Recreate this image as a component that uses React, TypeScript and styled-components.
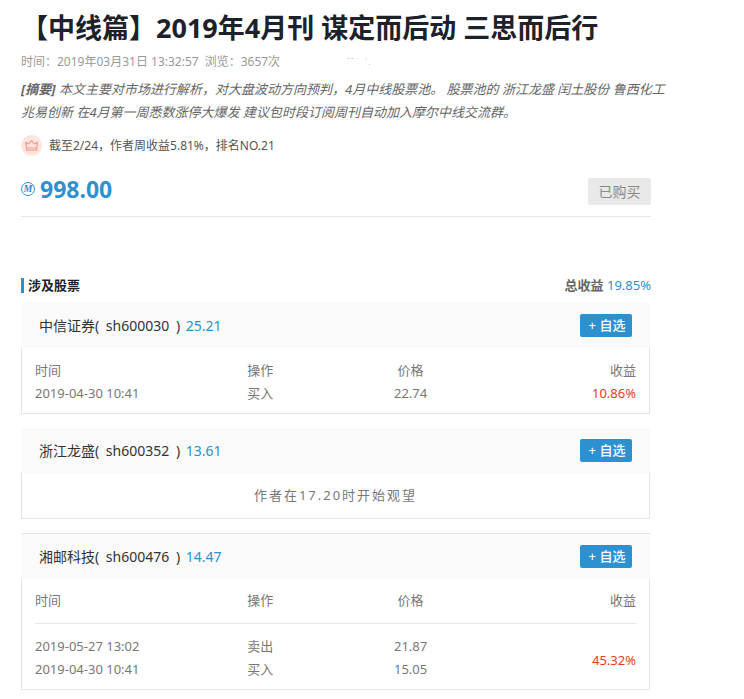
import React from "react";
import styled, { createGlobalStyle } from "styled-components";

const GlobalStyle = createGlobalStyle`
  * { box-sizing: border-box; }
  body {
    margin: 0;
    background: #fff;
    color: #777;
    font-family: "Noto Sans", "Noto Sans CJK SC", sans-serif;
    font-size: 13px;
    line-height: 23px;
  }
  h1, h2, h3, p { margin: 0; }
`;

const Page = styled.main`
  padding: 8px 93px 9px 21px;
`;

const Title = styled.h1`
  color: #1d2129;
  font-size: 27px;
  line-height: 40px;
  font-weight: 700;
  white-space: nowrap;
`;

const Meta = styled.div`
  display: flex;
  align-items: center;
  gap: 6px;
  height: 26px;
  color: #999;
  font-size: 12px;
`;

const FadedMark = styled.svg`
  margin-left: 60px;
`;

const Summary = styled.p`
  padding-top: 4px;
  color: #666;
  font-style: italic;
  white-space: nowrap;
`;

const Rank = styled.div`
  display: flex;
  align-items: center;
  gap: 7px;
  margin-top: 10px;
  color: #555;
  font-size: 12px;
`;

const PriceRow = styled.div`
  display: flex;
  align-items: flex-start;
  justify-content: space-between;
  margin-top: 21px;
  padding-bottom: 11px;
  border-bottom: 1px solid #e5e5e5;
`;

const Price = styled.div`
  display: flex;
  align-items: center;
  gap: 5px;
  color: #2d91cf;
  font-size: 23px;
  line-height: 22px;
  font-weight: 700;
`;

const Coin = styled.span`
  display: flex;
  align-items: center;
  justify-content: center;
  width: 14px;
  height: 14px;
  border: 1px solid #2d91cf;
  border-radius: 50%;
  font: italic 700 10px/12px "Liberation Serif", serif;
`;

const Purchased = styled.button`
  min-width: 63px;
  height: 27px;
  padding: 0 10px;
  border: 0;
  border-radius: 2px;
  background: #e9e9e9;
  color: #888;
  font: inherit;
  font-size: 14px;
`;

const SectionHead = styled.header`
  display: flex;
  align-items: center;
  justify-content: space-between;
  margin: 57px 0 6px;
`;

const SectionTitle = styled.h2`
  padding-left: 4px;
  border-left: 3px solid #2d91cf;
  color: #1d2129;
  font-size: 13px;
  line-height: 15px;
  font-weight: 700;
`;

const Total = styled.div`
  color: #2d91cf;
  strong { color: #666; }
`;

const Stack = styled.div`
  display: flex;
  flex-direction: column;
  gap: 14px;
  margin-right: 1px;
`;

const Card = styled.section<{ $topLine?: boolean }>`
  border-top: ${(p) => (p.$topLine ? "1px solid #e5e5e5" : "0")};
`;

const CardHead = styled.header`
  display: flex;
  align-items: center;
  justify-content: space-between;
  height: 45px;
  padding: 0 18px;
  background: #fafafa;
`;

const StockName = styled.h3`
  color: #333;
  font-size: 14px;
  font-weight: 400;
`;

const Code = styled.span`
  margin: 0 3px;
`;

const Quote = styled.span`
  margin-left: 2px;
  color: #2d91cf;
`;

const AddButton = styled.button`
  min-width: 52px;
  height: 23px;
  padding: 0 6px 0 8px;
  border: 0;
  border-radius: 2px;
  background: #2d91cf;
  color: #fff;
  font: inherit;
  font-weight: 500;
  line-height: 23px;
  cursor: pointer;
`;

const CardBody = styled.div<{ $ruled?: boolean }>`
  padding: ${(p) => (p.$ruled ? "10px" : "11px")} 13px 8px;
  border: 1px solid #e5e5e5;
  border-top: 0;
`;

const Notice = styled.p`
  padding-bottom: 3px;
  text-align: center;
  letter-spacing: 2px;
`;

const Trades = styled.table<{ $ruled?: boolean }>`
  width: 100%;
  table-layout: fixed;
  border-collapse: separate;
  border-spacing: 0;

  th, td {
    padding: 0;
    text-align: center;
    font-weight: 400;
  }
  th:first-child, tr > td:first-child { text-align: left; }
  th:last-child { text-align: right; }
  th {
    padding-bottom: ${(p) => (p.$ruled ? "11px" : "0")};
    border-bottom: ${(p) => (p.$ruled ? "1px solid #e5e5e5" : "0")};
  }
  tbody tr:first-child td { padding-top: ${(p) => (p.$ruled ? "11px" : "0")}; }
  tbody tr:first-child td:last-child { padding-top: ${(p) => (p.$ruled ? "15px" : "0")}; }
`;

const Profit = styled.td`
  && { text-align: right; }
  color: #e8401c;
`;

type Trade = { time: string; action: string; price: string };
type Stock = {
  name: string;
  code: string;
  quote: string;
  profit?: string;
  notice?: string;
  trades?: Trade[];
};

const stocks: Stock[] = [
  {
    name: "中信证券",
    code: "sh600030",
    quote: "25.21",
    profit: "10.86%",
    trades: [{ time: "2019-04-30 10:41", action: "买入", price: "22.74" }],
  },
  { name: "浙江龙盛", code: "sh600352", quote: "13.61", notice: "作者在17.20时开始观望" },
  {
    name: "湘邮科技",
    code: "sh600476",
    quote: "14.47",
    profit: "45.32%",
    trades: [
      { time: "2019-05-27 13:02", action: "卖出", price: "21.87" },
      { time: "2019-04-30 10:41", action: "买入", price: "15.05" },
    ],
  },
];

function CrownIcon() {
  return (
    <svg width="21" height="21" viewBox="0 0 21 21" fill="none" aria-hidden="true">
      <circle cx="10.5" cy="10.5" r="10.5" fill="#fee4de" />
      <path
        d="M4.7 7.4l3.2 1.4 2.7-3.2 2.7 3.2 3.2-1.4-1.1 7.7H5.8z"
        stroke="#f6a08d"
        strokeWidth="1.3"
        strokeLinejoin="round"
      />
      <path d="M5.6 12.9h10" stroke="#f6a08d" strokeWidth="1" />
    </svg>
  );
}

function StockCard({ stock }: { stock: Stock }) {
  const trades = stock.trades ?? [];
  const ruled = trades.length > 1;
  return (
    <Card $topLine={ruled}>
      <CardHead>
        <StockName>
          {stock.name}( <Code>{stock.code}</Code> ) <Quote>{stock.quote}</Quote>
        </StockName>
        <AddButton type="button">+ 自选</AddButton>
      </CardHead>
      <CardBody $ruled={ruled}>
        {stock.notice ? (
          <Notice>{stock.notice}</Notice>
        ) : (
          <Trades $ruled={ruled}>
            <thead>
              <tr>
                <th scope="col">时间</th>
                <th scope="col">操作</th>
                <th scope="col">价格</th>
                <th scope="col">收益</th>
              </tr>
            </thead>
            <tbody>
              {trades.map((t, i) => (
                <tr key={t.time}>
                  <td>{t.time}</td>
                  <td>{t.action}</td>
                  <td>{t.price}</td>
                  {i === 0 && <Profit rowSpan={trades.length}>{stock.profit}</Profit>}
                </tr>
              ))}
            </tbody>
          </Trades>
        )}
      </CardBody>
    </Card>
  );
}

export default function App() {
  return (
    <>
      <GlobalStyle />
      <Page>
        <Title>【中线篇】2019年4月刊 谋定而后动 三思而后行</Title>
        <Meta>
          <span>时间：2019年03月31日 13:32:57</span>
          <span>浏览：3657次</span>
          <FadedMark width="26" height="10" viewBox="0 0 26 10" aria-hidden="true">
            <path d="M1 2.5h8M11 2.5h1M19 3h2" stroke="#ddd" strokeDasharray="3 1" />
            <path d="M23 8.5h1" stroke="#ccc" />
          </FadedMark>
        </Meta>
        <Summary>
          <strong>[摘要]</strong> 本文主要对市场进行解析，对大盘波动方向预判，4月中线股票池。 股票池的 浙江龙盛 闰土股份 鲁西化工
          <br />
          兆易创新 在4月第一周悉数涨停大爆发 建议包时段订阅周刊自动加入摩尔中线交流群。
        </Summary>
        <Rank>
          <CrownIcon />
          <span>截至2/24，作者周收益5.81%，排名NO.21</span>
        </Rank>
        <PriceRow>
          <Price>
            <Coin aria-hidden="true">M</Coin>
            998.00
          </Price>
          <Purchased type="button">已购买</Purchased>
        </PriceRow>
        <SectionHead>
          <SectionTitle>涉及股票</SectionTitle>
          <Total>
            <strong>总收益</strong> 19.85%
          </Total>
        </SectionHead>
        <Stack>
          {stocks.map((s) => (
            <StockCard key={s.code} stock={s} />
          ))}
        </Stack>
      </Page>
    </>
  );
}
